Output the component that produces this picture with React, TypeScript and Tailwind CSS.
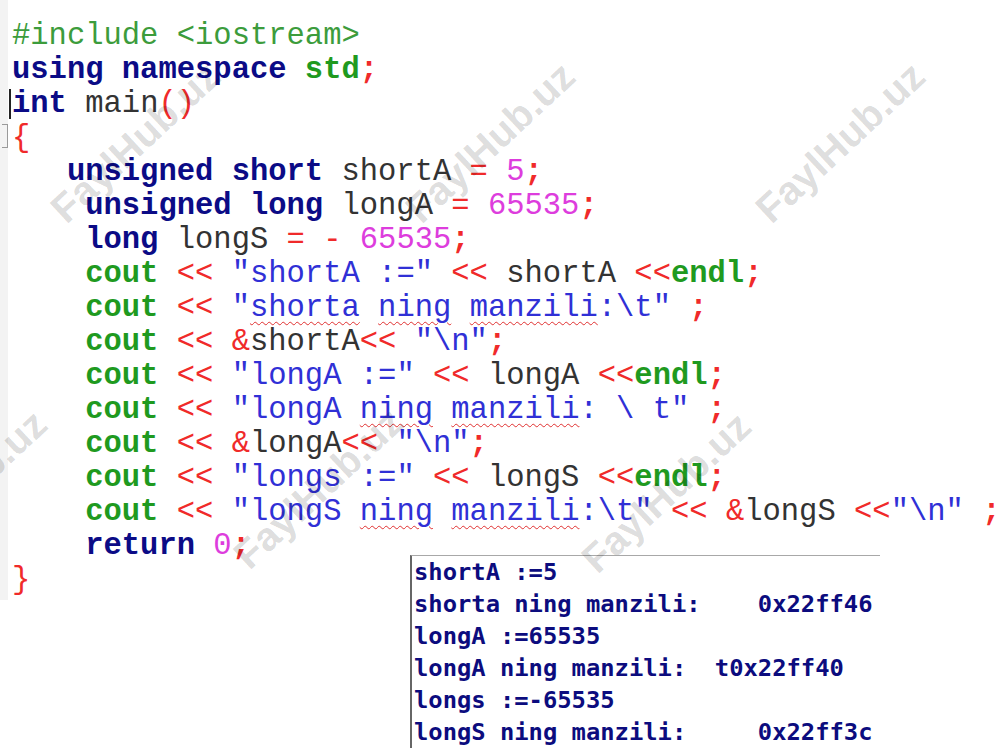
import React from "react";

type Tok = [string, string];

const KW = "font-bold text-[#0b0b86]";
const GR = "font-bold text-[#1f9a1f]";
const OP = "text-[#f02a2a]";
const SEMI = "font-bold text-[#f02a2a]";
const ID = "text-[#333333]";
const NUM = "text-[#dd3ddd]";
const STR = "text-[#3030d6]";
const SQ = "text-[#3030d6] underline decoration-wavy decoration-[#e03030] decoration-1 underline-offset-[5px]";

const LINES: Tok[][] = [
  [["#include <iostream>", "text-[#3c9c3c]"]],
  [["using namespace", KW], [" ", ID], ["std", GR], [";", SEMI]],
  [["int", KW], [" main", ID], ["()", OP]],
  [["{", OP]],
  [["   unsigned short", KW], [" shortA ", ID], ["=", OP], [" 5", NUM], [";", SEMI]],
  [["    unsigned long", KW], [" longA ", ID], ["=", OP], [" 65535", NUM], [";", SEMI]],
  [["    long", KW], [" longS ", ID], ["= -", OP], [" 65535", NUM], [";", SEMI]],
  [["    cout", GR], [" << ", OP], ['"shortA :="', STR], [" << ", OP], ["shortA ", ID], ["<<", OP], ["endl", GR], [";", SEMI]],
  [["    cout", GR], [" << ", OP], ['"', STR], ["shorta", SQ], [" ", STR], ["ning", SQ], [" ", STR], ["manzili", SQ], [':\\t"', STR], [" ;", SEMI]],
  [["    cout", GR], [" << ", OP], ["&", OP], ["shortA", ID], ["<<", OP], [' "\\n"', STR], [";", SEMI]],
  [["    cout", GR], [" << ", OP], ['"longA :="', STR], [" << ", OP], ["longA ", ID], ["<<", OP], ["endl", GR], [";", SEMI]],
  [["    cout", GR], [" << ", OP], ['"longA ', STR], ["ning", SQ], [" ", STR], ["manzili", SQ], [': \\ t"', STR], [" ;", SEMI]],
  [["    cout", GR], [" << ", OP], ["&", OP], ["longA", ID], ["<<", OP], [' "\\n"', STR], [";", SEMI]],
  [["    cout", GR], [" << ", OP], ['"longs :="', STR], [" << ", OP], ["longS ", ID], ["<<", OP], ["endl", GR], [";", SEMI]],
  [["    cout", GR], [" << ", OP], ['"longS ', STR], ["ning", SQ], [" ", STR], ["manzili", SQ], [':\\t"', STR], [" << ", OP], ["&", OP], ["longS ", ID], ["<<", OP], ['"\\n"', STR], [" ;", SEMI]],
  [["    return", KW], [" 0", NUM], [";", SEMI]],
  [["}", OP]],
];

const OUTPUT = [
  "shortA :=5",
  "shorta ning manzili:    0x22ff46",
  "longA :=65535",
  "longA ning manzili:  t0x22ff40",
  "longs :=-65535",
  "longS ning manzili:     0x22ff3c",
];

const MARKS = [
  "left-[135px] top-[142px]",
  "left-[490px] top-[142px]",
  "left-[840px] top-[142px]",
  "left-[-38px] top-[490px]",
  "left-[318px] top-[488px]",
  "left-[666px] top-[492px]",
];

export default function App() {
  return (
    <div className="relative h-[750px] w-[1000px] overflow-hidden bg-white">
      <div className="flex">
        <div className="flex h-[600px] w-[10px] flex-col bg-[#f3f3f3] pt-[124px]">
          <div className="ml-[2px] h-[24px] w-[6px] border-y border-r border-[#9a9a9a]" />
        </div>
        <div
          className="flex flex-col pl-[4px] pt-[19px] text-[30.5px] leading-[34px] whitespace-pre"
          style={{ fontFamily: '"Liberation Mono", "Courier New", monospace' }}
        >
          {LINES.map((line, i) => (
            <div key={i} className="h-[34px]">
              {i === 2 && (
                <span className="ml-[-3px] mr-[1px] inline-block h-[30px] w-[2px] bg-[#222] align-middle" />
              )}
              {line.map(([t, c], j) => (
                <span key={j} className={c}>
                  {t}
                </span>
              ))}
            </div>
          ))}
        </div>
      </div>

      <div className="-mt-[45px] ml-[410px] flex w-[470px] flex-col border-t border-l-2 border-t-[#a8a8a8] border-l-[#666] bg-white pl-[2px]">
        {OUTPUT.map((o, i) => (
          <div
            key={i}
            className="h-[32px] text-[23.8px] leading-[32px] font-bold whitespace-pre text-[#0c0c7e]"
            style={{ fontFamily: '"DejaVu Sans Mono", Consolas, monospace' }}
          >
            {o}
          </div>
        ))}
      </div>

      {MARKS.map((m, i) => (
        <span
          key={i}
          className={`pointer-events-none absolute ${m} -translate-x-1/2 -translate-y-1/2 rotate-[-43deg] text-[40px] font-bold whitespace-nowrap text-black/15`}
          style={{ fontFamily: '"Liberation Sans", Arial, sans-serif' }}
        >
          FaylHub.uz
        </span>
      ))}
    </div>
  );
}
